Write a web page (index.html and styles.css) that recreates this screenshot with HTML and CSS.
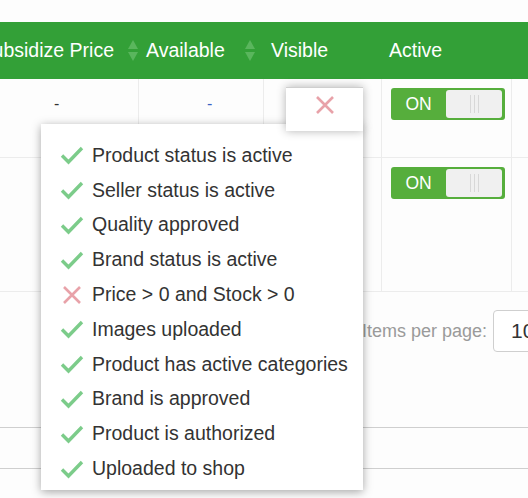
FILE: index.html
```html
<!DOCTYPE html>
<html>
<head>
<meta charset="utf-8">
<link rel="stylesheet" href="styles.css">
</head>
<body>
<div class="page">
  <div class="table">
    <div class="thead">
      <div class="th c1"><span>Subsidize Price</span><span class="sort"><i class="up"></i><i class="down"></i></span></div>
      <div class="th c2"><span>Available</span><span class="sort"><i class="up"></i><i class="down"></i></span></div>
      <div class="th c3"><span>Visible</span></div>
      <div class="th c4"><span>Active</span></div>
      <div class="th c5"></div>
    </div>
    <div class="tr r1">
      <div class="td c1"><span class="dash">-</span></div>
      <div class="td c2"><span class="dash blue">-</span></div>
      <div class="td c3"></div>
      <div class="td c4"><div class="toggle"><span class="on">ON</span><span class="knob"><i></i><i></i><i></i></span></div></div>
      <div class="td c5"></div>
    </div>
    <div class="tr r2">
      <div class="td c1"></div>
      <div class="td c2"></div>
      <div class="td c3"></div>
      <div class="td c4"><div class="toggle"><span class="on">ON</span><span class="knob"><i></i><i></i><i></i></span></div></div>
      <div class="td c5"></div>
    </div>
  </div>
  <div class="pager">
    <span class="ipp">Items per page:</span>
    <div class="select">10</div>
  </div>
  <div class="footer-lines"></div>

  <div class="pop-tab">
    <svg width="20" height="20" viewBox="0 0 20 20"><path d="M2 2 L18 18 M18 2 L2 18" stroke="#e8a2a9" stroke-width="2.6" fill="none"/></svg>
  </div>
  <div class="popover">
    <ul class="checks">
      <li><svg class="ok" viewBox="0 0 24 20"><path d="M2 10.5 L8.5 17 L22 3" /></svg>Product status is active</li>
      <li><svg class="ok" viewBox="0 0 24 20"><path d="M2 10.5 L8.5 17 L22 3" /></svg>Seller status is active</li>
      <li><svg class="ok" viewBox="0 0 24 20"><path d="M2 10.5 L8.5 17 L22 3" /></svg>Quality approved</li>
      <li><svg class="ok" viewBox="0 0 24 20"><path d="M2 10.5 L8.5 17 L22 3" /></svg>Brand status is active</li>
      <li><svg class="no" viewBox="0 0 24 20"><path d="M4 2 L20 18 M20 2 L4 18" /></svg>Price &gt; 0 and Stock &gt; 0</li>
      <li><svg class="ok" viewBox="0 0 24 20"><path d="M2 10.5 L8.5 17 L22 3" /></svg>Images uploaded</li>
      <li><svg class="ok" viewBox="0 0 24 20"><path d="M2 10.5 L8.5 17 L22 3" /></svg>Product has active categories</li>
      <li><svg class="ok" viewBox="0 0 24 20"><path d="M2 10.5 L8.5 17 L22 3" /></svg>Brand is approved</li>
      <li><svg class="ok" viewBox="0 0 24 20"><path d="M2 10.5 L8.5 17 L22 3" /></svg>Product is authorized</li>
      <li><svg class="ok" viewBox="0 0 24 20"><path d="M2 10.5 L8.5 17 L22 3" /></svg>Uploaded to shop</li>
    </ul>
  </div>
</div>
</body>
</html>
```
FILE: styles.css
```css
html, body {
  margin: 0;
  padding: 0;
  background: #fdfdfd;
  overflow: hidden;
}
body {
  font-family: "Liberation Sans", Arial, sans-serif;
  width: 528px;
  height: 498px;
}
.page {
  position: relative;
  width: 528px;
  height: 498px;
  overflow: hidden;
  padding-top: 22px;
  box-sizing: border-box;
}
.table {
  margin-left: -30px;
  width: 620px;
}
.thead, .tr {
  display: flex;
}
.thead {
  background: #33a037;
  height: 57px;
  color: #fff;
  font-size: 19.5px;
  white-space: nowrap;
}
.th {
  display: flex;
  align-items: center;
  box-sizing: border-box;
}
.c1 { width: 169px; }
.c2 { width: 125px; }
.c3 { width: 118px; }
.c4 { width: 130px; }
.c5 { width: 78px; }
.th.c1 { justify-content: flex-end; padding-right: 1px; }
.th.c1 .sort { margin-left: 14px; }
.th.c2 { padding-left: 7px; }
.th.c2 .sort { margin-left: 20px; }
.th.c3 { padding-left: 7px; }
.th.c4 { padding-left: 7px; }
.sort {
  display: flex;
  flex-direction: column;
  gap: 3px;
  width: 10px;
}
.sort i {
  display: block;
  width: 0;
  height: 0;
  border-left: 5px solid transparent;
  border-right: 5px solid transparent;
}
.sort .up { border-bottom: 9px solid #5ab65d; }
.sort .down { border-top: 9px solid #5ab65d; }
.tr {
  border-bottom: 1px solid #ececec;
}
.r1 { height: 78px; }
.r2 { height: 133px; }
.td {
  box-sizing: border-box;
  border-right: 1px solid #ececec;
}
.td.c5 { border-right: none; }
.td.c1 { padding-left: 84px; padding-top: 16px; }
.td.c2 { padding-left: 68px; padding-top: 16px; }
.dash {
  font-size: 16px;
  color: #333;
}
.dash.blue { color: #3a63c4; }
.td.c4 { padding-left: 9px; padding-top: 9px; }
.toggle {
  width: 114px;
  height: 32px;
  background: #56ae3c;
  border-radius: 3px;
  display: flex;
  align-items: center;
  box-sizing: border-box;
  padding: 2px 3px 2px 0;
}
.toggle .on {
  width: 55px;
  text-align: center;
  color: #fff;
  font-size: 17.5px;
}
.knob {
  flex: 1;
  height: 28px;
  background: #f0f0f0;
  border-radius: 3px;
  display: flex;
  justify-content: center;
  align-items: center;
  gap: 3px;
}
.knob i {
  display: block;
  width: 1px;
  height: 18px;
  background: #d8d8d8;
}
.pager {
  display: flex;
  align-items: center;
  padding-left: 362px;
  margin-top: 18px;
  height: 42px;
  white-space: nowrap;
  width: 700px;
}
.ipp {
  font-size: 18px;
  color: #9a9a9a;
}
.select {
  flex: none;
  margin-left: 6px;
  width: 60px;
  height: 42px;
  border: 1px solid #cfcfcf;
  border-radius: 4px;
  box-sizing: border-box;
  font-size: 21px;
  color: #333;
  padding-left: 17px;
  line-height: 40px;
  background: #fff;
}
.footer-lines {
  margin-top: 75px;
  height: 40px;
  border-top: 1px solid #cfcfcf;
  border-bottom: 1px solid #cfcfcf;
}
.popover {
  position: absolute;
  left: 41px;
  top: 124px;
  width: 322px;
  height: 366px;
  background: #fff;
  box-shadow: 0 2px 9px rgba(0, 0, 0, 0.35);
  box-sizing: border-box;
  padding-top: 14px;
  z-index: 1;
}
.pop-tab {
  position: absolute;
  left: 286px;
  top: 87px;
  width: 77px;
  height: 44px;
  background: #fff;
  border-top: 1px solid #cfcfcf;
  box-shadow: 0 0 9px rgba(0, 0, 0, 0.3);
  display: flex;
  justify-content: center;
  padding-top: 7px;
  box-sizing: border-box;
  z-index: 2;
}
.checks {
  list-style: none;
  margin: 0;
  padding: 0 0 0 19px;
  position: relative;
  z-index: 3;
}
.checks li {
  display: flex;
  align-items: center;
  height: 34.8px;
  font-size: 19.5px;
  color: #333;
  white-space: nowrap;
}
.checks svg {
  flex: none;
  width: 24px;
  height: 20px;
  margin-right: 8px;
  fill: none;
}
.checks svg.ok path {
  stroke: #7ccc8a;
  stroke-width: 3.4;
}
.checks svg.no path {
  stroke: #e8a2a9;
  stroke-width: 2.6;
}
```
